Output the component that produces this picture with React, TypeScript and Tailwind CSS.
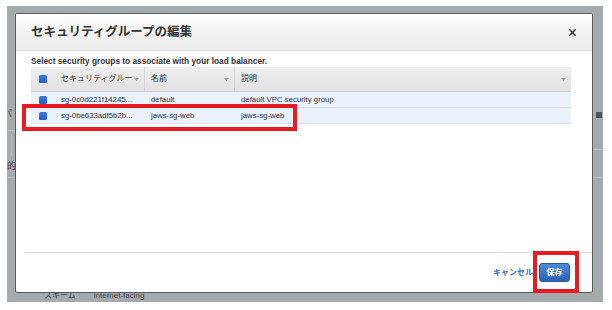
import { X } from 'lucide-react'

const font = "font-['Liberation_Sans','Noto_Sans_CJK_JP',sans-serif]"

interface SecurityGroup {
  id: string
  name: string
  description: string
}

const groups: SecurityGroup[] = [
  { id: 'sg-0c0d221f14245...', name: 'default', description: 'default VPC security group' },
  { id: 'sg-0be633adf5b2b...', name: 'jaws-sg-web', description: 'jaws-sg-web' }
]

const SortArrow = () => (
  <svg width="5" height="3" viewBox="0 0 5 3" className="shrink-0">
    <polygon points="0,0 5,0 2.5,3" fill="#a0a0a0" />
  </svg>
)

const Check = () => (
  <div className="w-[8px] h-[8px] rounded-[1.5px] bg-linear-to-b from-[#3b7be0] to-[#2760c4]" />
)

const HeaderCell = ({ label, width, last }: { label: string; width?: string; last?: boolean }) => (
  <div className={`flex items-center h-full pl-[6px] pr-[5px] ${width ?? 'flex-1'} ${last ? '' : 'border-r border-[#d3d3d3]'}`}>
    <span className="flex-1 whitespace-nowrap text-[8px] text-[#333]">{label}</span>
    <SortArrow />
  </div>
)

const App = () => {
  return (
    <div className={`relative w-[612px] h-[310px] bg-white pt-[6px] pl-[7px] ${font}`}>
      <div className="relative w-[596px] h-[296px] bg-[#a5aaad] pt-[7px] pl-[8px] overflow-hidden">
        {/* page behind the overlay */}
        <span className="absolute left-[-4px] top-[102px] text-[9px] text-[#3f4244]">パ</span>
        <div className="absolute left-0 top-[124px] w-[8px] h-px bg-[#b9bdc0]" />
        <div className="absolute left-[4px] top-[128px] w-px h-[22px] bg-[#b9bdc0]" />
        <span className="absolute left-0 top-[154px] text-[9px] text-[#3f4244]">的</span>
        <div className="absolute left-0 top-[171px] w-[8px] h-px bg-[#b9bdc0]" />
        <div className="absolute right-[1px] top-[106px] w-[6px] h-[6px] bg-[#50555a]" />
        <div className="absolute right-0 top-[143px] w-[10px] h-px bg-[#b9bdc0]" />
        <div className="absolute right-0 top-[171px] w-[10px] h-px bg-[#b9bdc0]" />
        <div className="absolute left-[37px] top-[284px] flex gap-[18px] text-[8px] text-[#3f4244]">
          <span>スキーム</span>
          <span>internet-facing</span>
        </div>

        {/* modal */}
        <div className="relative z-10 flex flex-col w-[578px] h-[280px] bg-white border border-[#585c60] rounded-[2px]">
          <div className="flex items-center justify-between h-[37px] pl-[15px] pr-[14px] bg-linear-to-b from-[#fdfdfd] to-[#ebebeb] border-b border-[#dcdcdc]">
            <h2 className="text-[12.5px] font-bold text-[#333]">セキュリティグループの編集</h2>
            <X size={11} strokeWidth={3.2} color="#333" />
          </div>

          <div className="flex-1 pl-[15px]">
            <p className="mt-[5px] h-[10px] leading-[10px] text-[8.3px] font-bold text-[#333]">
              Select security groups to associate with your load balancer.
            </p>
            <div className="mt-[1px] w-[540px]">
              <div className="flex items-center h-[25px] bg-linear-to-b from-[#efefef] to-[#e1e1e1] border-b border-[#d0d0d0]">
                <div className="flex items-center justify-center w-[24px] h-full">
                  <Check />
                </div>
                <HeaderCell label="セキュリティグルー" width="w-[90px]" />
                <HeaderCell label="名前" width="w-[90px]" />
                <HeaderCell label="説明" last />
              </div>
              {groups.map(group => (
                <div key={group.id} className="flex items-center h-[16px] bg-[#eaf1fb] border-b border-[#d6dfeb] text-[7.8px] text-[#333]">
                  <div className="flex items-center justify-center w-[24px]">
                    <Check />
                  </div>
                  <div className="w-[90px] pl-[6px] whitespace-nowrap">{group.id}</div>
                  <div className="w-[90px] pl-[6px] whitespace-nowrap">{group.name}</div>
                  <div className="flex-1 pl-[6px] whitespace-nowrap">{group.description}</div>
                </div>
              ))}
            </div>
          </div>

          <div className="ml-[9px] border-t border-[#e2e2e2] h-[40px] flex items-center justify-end gap-[6px] pr-[22px]">
            <button type="button" className="text-[8px] font-bold text-[#2f6bc6]">
              キャンセル
            </button>
            <button
              type="button"
              className="w-[31px] h-[19px] rounded-[3px] bg-linear-to-b from-[#4d8ad9] to-[#2b62b6] border border-[#2a5aa5] text-[8px] font-bold text-white">
              保存
            </button>
          </div>
        </div>
      </div>

      {/* annotations */}
      <div className="absolute z-20 left-[22px] top-[104px] w-[275px] h-[27px] border-[4px] border-[#ea1a22]" />
      <div className="absolute z-20 left-[533px] top-[251px] w-[46px] h-[42px] border-[4px] border-[#ea1a22]" />
    </div>
  )
}

export default App
